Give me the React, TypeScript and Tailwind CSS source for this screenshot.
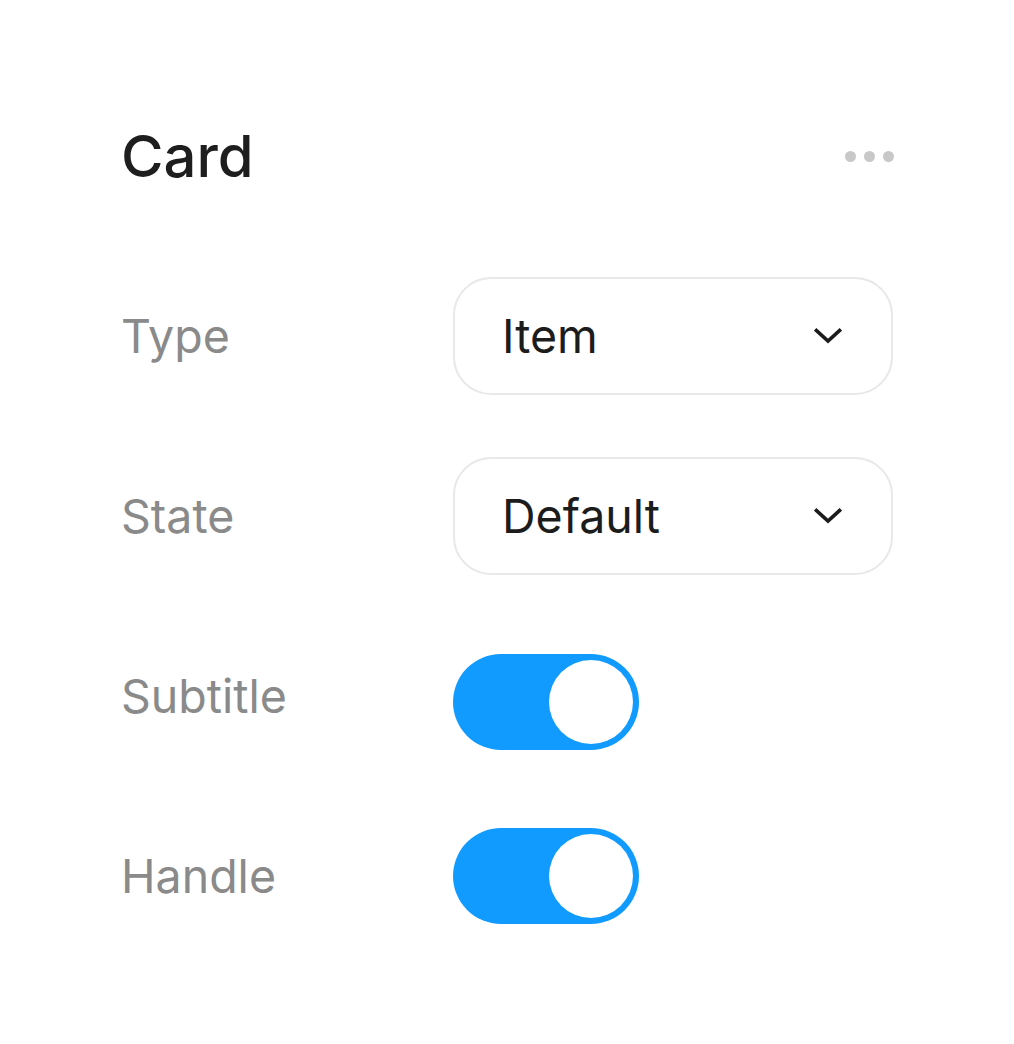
import * as React from 'react';

function Chevron() {
  return (
    <svg width="28" height="18" viewBox="0 0 28 18" fill="none" className="shrink-0">
      <path d="M2.5 3.5 L14 14 L25.5 3.5" stroke="#1c1c1c" strokeWidth="3.6" strokeLinecap="square" strokeLinejoin="miter" />
    </svg>
  );
}

function Select({ value }: { value: string }) {
  return (
    <div className="w-[440px] h-[118px] border-2 border-[#e8e8e8] rounded-[38px] flex items-center justify-between pl-[47px] pr-[49px]">
      <span className="text-[46.5px] leading-none text-[#1c1c1c]">{value}</span>
      <Chevron />
    </div>
  );
}

function Toggle({ className = '' }: { className?: string }) {
  return (
    <div className={`w-[186px] h-[96px] rounded-full bg-[#129bff] flex items-center justify-end p-[6px] ${className}`}>
      <div className="w-[84px] h-[84px] rounded-full bg-white" />
    </div>
  );
}

function Row({ label, children }: { label: string; children: React.ReactNode }) {
  return (
    <div className="h-[180px] flex items-center">
      <span className="w-[332px] text-[46.5px] leading-none text-[#8a8a8a]">{label}</span>
      {children}
    </div>
  );
}

export default function App() {
  return (
    <div className="w-[1014px] h-[1044px] bg-white pt-[66px] pl-[121px]" style={{ fontFamily: 'Inter, "Noto Sans", sans-serif' }}>
      <div className="w-[773px]">
        <div className="h-[180px] flex items-center justify-between">
          <h1 className="text-[58px] leading-none text-[#1e1e1e] font-medium">Card</h1>
          <div className="flex items-center gap-[8px]">
            <span className="w-[11px] h-[11px] rounded-full bg-[#c8c8c8]" />
            <span className="w-[11px] h-[11px] rounded-full bg-[#c8c8c8]" />
            <span className="w-[11px] h-[11px] rounded-full bg-[#c8c8c8]" />
          </div>
        </div>
        <Row label="Type">
          <Select value="Item" />
        </Row>
        <Row label="State">
          <Select value="Default" />
        </Row>
        <Row label="Subtitle">
          <Toggle className="mt-[12px]" />
        </Row>
        <Row label="Handle">
          <Toggle />
        </Row>
      </div>
    </div>
  );
}
